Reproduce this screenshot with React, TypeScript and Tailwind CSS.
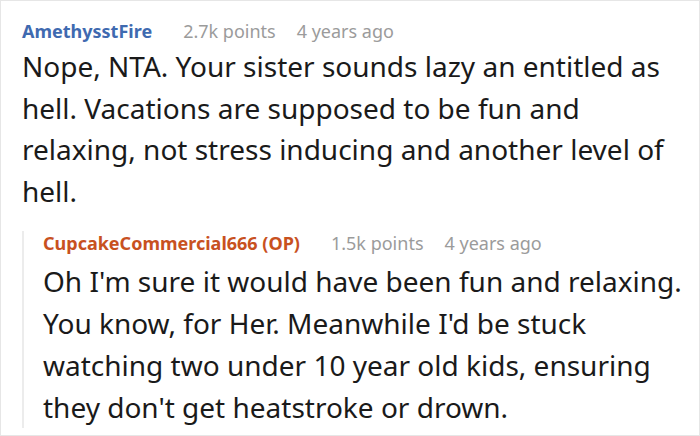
export default function App() {
  return (
    <div
      className="w-[700px] h-[436px] bg-white border border-[#e6e6e6] overflow-hidden"
      style={{ fontFamily: '"Noto Sans", "Open Sans", sans-serif' }}
    >
      <div className="pl-[21px] pr-[16px] pt-[18px]">
        {/* Top comment */}
        <div className="flex items-baseline text-[18px] leading-[24px]">
          <span className="font-bold text-[#3f6ab0]">AmethysstFire</span>
          <span className="ml-[31px] text-[#9b9b9b]">2.7k points</span>
          <span className="ml-[21px] text-[#9b9b9b]">4 years ago</span>
        </div>
        <p className="mt-[3px] text-[28px] leading-[41.5px] text-[#1a1a1a]">
          Nope, NTA. Your sister sounds lazy an entitled as hell. Vacations are supposed to be fun and relaxing, not stress inducing and another level of hell.
        </p>

        {/* Reply */}
        <div className="mt-[26px] border-l-2 border-[#ececec] pl-[19px]">
          <div className="flex items-baseline text-[18px] leading-[24px] -mt-[7px]">
            <span className="font-bold text-[#c8511f]">CupcakeCommercial666 (OP)</span>
            <span className="ml-[31px] text-[#9b9b9b]">1.5k points</span>
            <span className="ml-[21px] text-[#9b9b9b]">4 years ago</span>
          </div>
          <p className="mt-[5px] -mb-[12px] text-[28px] leading-[42px] text-[#1a1a1a]">
            Oh I'm sure it would have been fun and relaxing. You know, for Her. Meanwhile I'd be stuck watching two under 10 year old kids, ensuring they don't get heatstroke or drown.
          </p>
        </div>
      </div>
    </div>
  );
}
